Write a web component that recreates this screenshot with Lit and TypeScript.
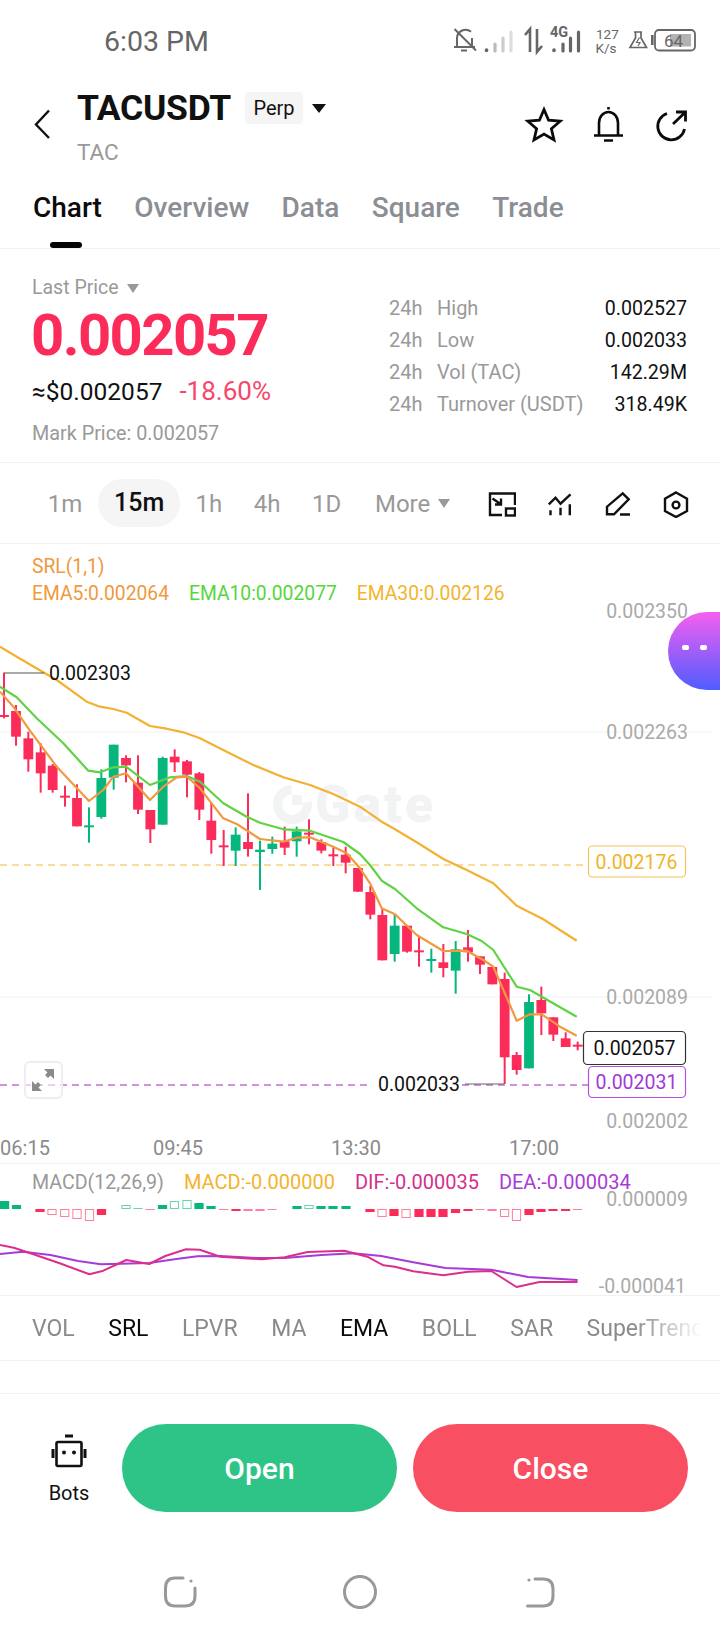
import { LitElement, html, css, svg } from "lit";
import { customElement } from "lit/decorators.js";

type C = [number, number, number, number, number, string];
const RED = "#fb2c5a";
const GREEN = "#07b67c";

// x, wickTop, bodyTop, bodyBottom, wickBottom, colour (measured on two crops)
const c3: C[] = [
  [12, 98, 225, 231, 235, "r"], [48, 195, 213, 290, 317, "r"], [85, 275, 295, 358, 395, "r"],
  [122, 310, 337, 400, 458, "r"], [158, 372, 377, 450, 458, "r"], [195, 437, 467, 471, 500, "r"],
  [231, 433, 474, 559, 559, "r"], [267, 502, 556, 562, 608, "g"], [304, 388, 414, 531, 536, "g"],
  [341, 314, 314, 413, 449, "g"], [378, 346, 354, 376, 427, "r"], [414, 346, 428, 509, 522, "r"],
  [451, 510, 510, 568, 609, "r"], [488, 350, 354, 554, 554, "g"], [524, 328, 350, 367, 396, "r"],
  [561, 360, 364, 404, 472, "r"], [598, 396, 400, 509, 540, "r"], [634, 488, 542, 600, 641, "r"],
  [671, 570, 616, 622, 678, "r"], [707, 562, 584, 632, 678, "g"], [744, 460, 606, 627, 650, "r"],
  [780, 602, 629, 636, 750, "g"], [817, 590, 611, 627, 641, "g"], [854, 560, 604, 623, 645, "r"],
  [890, 560, 574, 604, 650, "g"], [927, 538, 578, 584, 613, "r"], [964, 598, 606, 632, 640, "r"],
  [1000, 622, 643, 649, 678, "r"], [1037, 620, 644, 668, 700, "r"], [1074, 684, 684, 755, 756, "r"],
];
const c4: C[] = [
  [31, 318, 336, 404, 418, "r"], [67, 385, 405, 541, 541, "r"], [104, 405, 437, 522, 545, "g"],
  [141, 437, 437, 515, 518, "r"], [177, 467, 511, 517, 560, "r"], [214, 506, 537, 541, 578, "g"],
  [250, 492, 547, 564, 592, "r"], [287, 483, 508, 572, 641, "g"], [324, 450, 502, 517, 545, "r"],
  [360, 529, 529, 554, 582, "r"], [397, 561, 561, 613, 613, "r"], [434, 578, 597, 832, 912, "r"],
  [470, 816, 825, 870, 884, "r"], [507, 643, 666, 865, 865, "g"], [544, 620, 660, 700, 765, "r"],
  [580, 712, 712, 764, 783, "r"], [617, 757, 775, 801, 801, "r"], [653, 785, 794, 800, 811, "r"],
];
const candles: C[] = [
  ...c3.map((c): C => [c[0] / 3, 640 + c[1] / 3, 640 + c[2] / 3, 640 + c[3] / 3, 640 + c[4] / 3, c[5]]),
  ...c4.map((c): C => [360 + c[0] / 3, 780 + c[1] / 3, 780 + c[2] / 3, 780 + c[3] / 3, 780 + c[4] / 3, c[5]]),
];

const pts = (a: number[][], b: number[][]) =>
  [...a.map((p) => `${(p[0] / 3).toFixed(1)},${(640 + p[1] / 3).toFixed(1)}`),
   ...b.map((p) => `${(360 + p[0] / 3).toFixed(1)},${(780 + p[1] / 3).toFixed(1)}`)].join(" ");

const ema30 = pts(
  [[0,20],[50,50],[135,100],[170,120],[260,185],[300,200],[340,207],[380,218],[450,258],[500,266],[550,277],[600,295],[680,335],[760,375],[850,412],[930,435],[1000,462]],
  [[0,80],[65,125],[100,145],[175,190],[250,237],[320,270],[400,310],[470,377],[550,418],[650,482]]);
const ema10 = pts(
  [[0,140],[50,172],[110,235],[190,310],[265,392],[300,397],[340,382],[378,380],[450,435],[510,412],[560,408],[600,425],[670,490],[740,530],[780,548],[850,568],[930,572],[1030,606]],
  [[0,222],[30,255],[65,302],[105,327],[170,385],[250,442],[320,462],[365,483],[400,510],[470,620],[510,630],[650,710]]);
const ema5 = pts(
  [[0,155],[40,200],[85,265],[170,380],[267,483],[310,450],[340,410],[378,400],[450,480],[490,440],[530,412],[561,410],[600,445],[670,535],[710,552],[780,597],[850,605],[890,593],[930,592],[1000,620],[1040,640]],
  [[0,265],[30,310],[65,385],[105,403],[170,465],[250,513],[320,512],[370,540],[400,560],[470,722],[510,703],[545,703],[600,740],[650,767]]);

// x, height (negative = up), style: s solid / h hollow, colour
const bars: [number, number, string, string][] = [
  [4.6,-8,"s","g"],[16.5,-4,"s","g"],[40,3,"s","r"],[52,6,"h","r"],[64.7,8,"h","r"],[77,10,"h","r"],[89.5,12,"h","r"],[101.5,6,"s","r"],
  [126,-4,"h","g"],[138,-1,"s","g"],[150,1,"s","r"],[162.5,-4,"s","g"],[174.5,-8,"h","g"],[187,-9,"h","g"],[199,-6,"s","g"],[211,-3,"s","g"],
  [223.6,1,"s","r"],[236,2,"s","r"],[248,2,"h","r"],[260,2,"h","r"],[272,1,"s","r"],
  [297,-3,"s","g"],[309,-4,"h","g"],[321,-3,"s","g"],[333,-3,"s","g"],[346,-3,"s","g"],
  [370,3,"s","r"],[382,8,"h","r"],[394,7,"s","r"],[406,9,"h","r"],[419,8,"s","r"],[431,8,"s","r"],[443,8,"s","r"],[455.5,4,"s","r"],
  [468,2,"s","r"],[480,1,"s","r"],[492,2,"h","r"],[504.6,8,"h","r"],[516.5,12,"h","r"],[529,6,"s","r"],[541,3,"s","r"],[553,2,"s","r"],[565.6,2,"s","r"],[577.6,1,"s","r"],
];
const mp = (a: number[][]) => a.map((p) => `${(p[0] / 2.178).toFixed(1)},${(1150 + p[1] / 3).toFixed(1)}`).join(" ");
const dif = mp([[0,285],[30,293],[60,307],[130,340],[195,373],[225,362],[275,330],[325,342],[360,318],[405,298],[435,299],[480,320],[570,328],[620,322],[670,306],[750,302],[800,320],[835,346],[860,350],[900,364],[965,376],[1020,365],[1070,363],[1125,411],[1175,396],[1258,396]]);
const dea = mp([[0,312],[50,305],[110,315],[170,333],[220,343],[325,339],[380,328],[430,319],[480,318],[560,324],[620,324],[700,315],[770,310],[830,318],[900,337],[970,354],[1070,359],[1150,381],[1258,390]]);

@customElement("app-root")
export class AppRoot extends LitElement {
  static styles = css`
    :host { display: block; width: 720px; height: 1640px; overflow: hidden; background: #fff;
      font-family: Roboto, "Liberation Sans", sans-serif; color: #111; }
    svg { display: block; }
    .status { height: 78px; display: flex; justify-content: space-between; padding: 0 20px 0 104px; }
    .time { font-size: 28.5px; line-height: 28px; margin-top: 28px; color: #666; }
    .status-icons { width: 250px; height: 36px; margin-top: 20px; }
    .header { height: 104px; display: flex; padding: 0 28px 0 33px; box-sizing: border-box; }
    .back { width: 19px; height: 32px; margin-top: 30px; margin-right: 25px; }
    .title-row { display: flex; align-items: center; height: 32px; margin-top: 14px; }
    .title { font-size: 35.5px; font-weight: 700; letter-spacing: -0.3px; }
    .chip { margin-left: 14px; height: 32px; width: 58px; display: flex; align-items: center; justify-content: center;
      background: #f5f5f5; border-radius: 4px; font-size: 20px; }
    .tri { width: 0; height: 0; border-left: 7px solid transparent; border-right: 7px solid transparent; border-top: 9px solid #111; }
    .chip + .tri { margin-left: 9px; }
    .sub { font-size: 22.5px; line-height: 24px; margin-top: 16px; color: #999; }
    .head-icons { width: 170px; height: 40px; margin-left: auto; margin-top: 26px; }
    .tabs { height: 67px; box-sizing: border-box; border-bottom: 1px solid #f1f1f1; }
    .tab-row { display: flex; gap: 32.4px; padding: 11px 0 0 33px; }
    .tab { font-size: 28px; line-height: 30px; font-weight: 500; color: #8b8e93; }
    .tab.on { color: #0b0b0b; }
    .ink { width: 32px; height: 6px; background: #050505; border-radius: 3px; margin: 19px 0 0 50px; }
    .price { height: 214px; box-sizing: border-box; border-bottom: 1px solid #f1f1f1; display: flex; padding-left: 32px; }
    .left { width: 357px; padding-top: 27px; }
    .last { display: flex; align-items: center; gap: 8px; font-size: 19.5px; line-height: 24px; color: #999; }
    .last .tri, .more .tri { border-top-color: #999; border-left-width: 6.5px; border-right-width: 6.5px; border-top-width: 9px; }
    .big { font-size: 58px; font-weight: 700; line-height: 60px; margin: 5px 0 0 -1px; color: #fb2c5a; letter-spacing: -1.6px; }
    .usd { display: flex; align-items: baseline; gap: 17px; font-size: 24.5px; line-height: 30px; margin-top: 11px; }
    .usd span + span { color: #f6476a; font-size: 26px; }
    .mark { font-size: 19.8px; line-height: 26px; margin-top: 14px; color: #999; }
    .stats { width: 298px; padding-top: 43px; }
    .stat { display: flex; height: 32px; align-items: center; font-size: 20px; color: #999; }
    .stat .h { width: 48px; }
    .stat .v { margin-left: auto; color: #111; font-size: 19.6px; }
    .frames { height: 81px; box-sizing: border-box; border-bottom: 1px solid #f1f1f1; display: flex; align-items: center; padding: 1px 30px 0 32px; }
    .f { font-size: 24px; color: #999; height: 48px; line-height: 48px; padding: 0 15.75px; border-radius: 24px; }
    .f.on { color: #111; font-weight: 500; font-size: 25px; padding: 0 16px; background: #f5f5f5; margin: -1px -0.5px 0 0; }
    .more { display: flex; align-items: center; gap: 8px; font-size: 24px; color: #999; padding-left: 18px; }
    .tools { display: flex; gap: 30px; margin-left: auto; }
    .tools svg { width: 28px; height: 28px; }
    .chart { position: relative; height: 620px; box-sizing: border-box; border-bottom: 1px solid #f1f1f1; padding: 10px 0 0 32px; overflow: hidden; }
    .plot { position: absolute; left: 0; top: 0; }
    .leg { position: relative; font-size: 19.3px; line-height: 26px; color: #f0993e; }
    .leg-row { position: relative; display: flex; gap: 20px; font-size: 19.3px; line-height: 26px; margin-top: 1px; }
    .orange { color: #f0993e; } .lime { color: #55d63c; } .amber { color: #f4b32c; }
    .bubble { position: absolute; left: 668px; top: 68px; width: 60px; height: 78px; border-radius: 39px 0 0 39px;
      background: linear-gradient(180deg, #f55ff0, #4f5cff); display: flex; align-items: center; justify-content: center; gap: 11px; padding: 0 8px 8px 0; box-sizing: border-box; }
    .eye { width: 7px; height: 5px; border-radius: 2px; background: #fff; }
    .expand { position: absolute; left: 24px; top: 517px; width: 39px; height: 38px; box-sizing: border-box; border: 2px solid #eeeeee; border-radius: 6px; background: rgba(255,255,255,.55); }
    .macd { position: relative; height: 132px; box-sizing: border-box; border-bottom: 1px solid #f1f1f1; }
    .macd-leg { position: relative; display: flex; align-items: baseline; gap: 20px; padding: 5px 0 0 32px; font-size: 20px; line-height: 26px; }
    .gray { color: #999; font-size: 19.6px; } .pink { color: #d4308c; } .violet { color: #a83bd6; }
    .inds { height: 65px; box-sizing: border-box; border-bottom: 1px solid #f1f1f1; display: flex; align-items: center; gap: 33.5px; padding-left: 32px; width: 703px;
      font-size: 23px; color: #8a8a8a; white-space: nowrap; overflow: hidden;
      -webkit-mask-image: linear-gradient(90deg, #000 90%, transparent); mask-image: linear-gradient(90deg, #000 90%, transparent); }
    .inds .on { color: #0b0b0b; }
    .rule { width: 720px; height: 1px; background: #f1f1f1; margin-top: -1px; }
    .inds-line { height: 33px; box-sizing: border-box; border-bottom: 1px solid #f1f1f1; }
    .foot { display: flex; gap: 16px; height: 118px; padding: 30px 32px 0 18px; }
    .bots { width: 88px; box-sizing: border-box; padding: 10px 0 0 14px; display: flex; flex-direction: column; align-items: center; font-size: 20px; }
    .bots svg { width: 36px; height: 34px; }
    .bots span { margin-top: 13px; line-height: 24px; }
    .btn { flex: 1; height: 88px; border-radius: 44px; display: flex; align-items: center; justify-content: center; color: #fff; font-size: 30px; font-weight: 500; }
    .open { background: #2ec487; } .close { background: #f94f63; }
    .nav { width: 720px; height: 55px; margin-top: 18px; }
  `;

  private statusIcons() {
    return html`<svg class="status-icons" viewBox="450 20 250 36" fill="none" stroke="#666">
      <path d="M457 46V38a8.500 8.500 0 0 1 14-6.200M472 38v8M454 47H475M461 50.500h6" stroke-width="2"/>
      <path d="M454.500 29L476 50.500" stroke-width="2"/>
      <g stroke-width="3.200" stroke-linecap="round">
        <path d="M486.500 50v.5" stroke-width="3.600"/>
        <path d="M495 44v7" stroke="#bbb"/><path d="M503 38v13" stroke="#ccc"/><path d="M511 32v19" stroke="#ddd"/>
      </g>
      <path d="M530 52V29L525 35M537 29V52L542 46" stroke-width="2.600"/>
      <g stroke-width="3.200" stroke-linecap="round">
        <path d="M554 50v.5" stroke-width="3.600"/><path d="M563 44v7"/><path d="M570.500 38v13"/><path d="M578.500 32v19"/>
      </g>
      <path d="M634 32H642M635.500 32V38L630 47.500H646.500L641 38V32" stroke-width="1.700"/>
      <path d="M639.500 37.500l-3 5h3.500l-2 3.500" stroke-width="1.200"/>
      <rect x="651" y="35" width="2.600" height="10" fill="#666" stroke="none"/>
      <rect x="655" y="30" width="40" height="20.500" rx="4" stroke-width="1.800"/>
      <rect x="670" y="34" width="21" height="12.500" fill="#b2b2b2" stroke="none"/>
      <g fill="#666" stroke="none" font-family="Roboto, sans-serif">
        <text x="550" y="36.500" font-size="14.500" font-weight="700">4G</text>
        <text x="596" y="38.500" font-size="13.500">127</text>
        <text x="595.500" y="53" font-size="13.500">K/s</text>
        <text x="664" y="47" font-size="17">64</text>
      </g>
    </svg>`;
  }

  private plot() {
    return html`<svg class="plot" width="720" height="620" viewBox="0 544 720 620" fill="none">
      <path d="M0 732H712M0 997H712" stroke="#f1f2f3" stroke-width="1"/>
      <circle cx="292.500" cy="804.500" r="15" stroke="#f1f3f5" stroke-width="9" stroke-dasharray="72 22.300" transform="rotate(-10 292.500 804.500)"/>
      <rect x="292" y="795" width="10" height="10" fill="#f1f3f5"/>
      <text x="315" y="822" font-family="Roboto, sans-serif" font-size="52" font-weight="900" letter-spacing="3" fill="#f1f3f5">Gate</text>
      <path d="M0 865H588" stroke="#f9d27a" stroke-width="1.600" stroke-dasharray="7 5"/>
      <path d="M0 1085H372M462 1085H588" stroke="#c46cd6" stroke-width="1.300" stroke-dasharray="7 5"/>
      ${candles.map((c) => {
        const col = c[5] === "r" ? RED : GREEN;
        return svg`<rect x=${c[0] - 1} y=${c[1]} width="2" height=${c[4] - c[1]} fill=${col}/>
          <rect x=${c[0] - 4.9} y=${c[2]} width="9.8" height=${Math.max(c[3] - c[2], 2)} fill=${col}/>`;
      })}
      <polyline points=${ema30} stroke="#f2b132" stroke-width="2.200" stroke-linejoin="round"/>
      <polyline points=${ema10} stroke="#5fd343" stroke-width="2.200" stroke-linejoin="round"/>
      <polyline points=${ema5} stroke="#f0993e" stroke-width="2.200" stroke-linejoin="round"/>
      <path d="M4 673H44" stroke="#555" stroke-width="1.200"/>
      <path d="M465 1084H504" stroke="#666" stroke-width="1.200"/>
      <g font-family="Roboto, sans-serif" font-size="19.500">
        <text x="49" y="680" fill="#111">0.002303</text>
        <text x="378" y="1091" fill="#111">0.002033</text>
        <g fill="#aaa" text-anchor="end">
          <text x="688" y="618">0.002350</text>
          <text x="688" y="739">0.002263</text>
          <text x="688" y="1004">0.002089</text>
          <text x="688" y="1128">0.002002</text>
        </g>
        <g fill="#8a8a8a" text-anchor="middle" font-size="20">
          <text x="25" y="1155">06:15</text>
          <text x="178" y="1155">09:45</text>
          <text x="356" y="1155">13:30</text>
          <text x="534" y="1155">17:00</text>
        </g>
        <rect x="588.500" y="846" width="97" height="31" rx="4" fill="#fff" stroke="#f7c25e" stroke-width="1.200"/>
        <text x="636.500" y="869" text-anchor="middle" fill="#f0b429">0.002176</text>
        <rect x="583.500" y="1031.500" width="102" height="33" rx="4" fill="#fff" stroke="#333" stroke-width="1.200"/>
        <text x="634.500" y="1055" text-anchor="middle" fill="#111">0.002057</text>
        <rect x="588.500" y="1066.500" width="97" height="31" rx="4" fill="#fff" stroke="#b44fe0" stroke-width="1.200"/>
        <text x="636.500" y="1089" text-anchor="middle" fill="#a338d8">0.002031</text>
      </g>
    </svg>`;
  }

  private macdPlot() {
    return html`<svg class="plot" width="720" height="132" viewBox="0 1164 720 132" fill="none">
      ${bars.map(([x, h, st, col]) => {
        const c = col === "r" ? RED : GREEN;
        const y = h < 0 ? 1209 + h : 1209;
        const ah = Math.abs(h);
        return st === "s" || ah < 2
          ? svg`<rect x=${x - 4.6} y=${y} width="9.2" height=${ah} fill=${c} opacity=${ah < 2 ? 0.6 : 1}/>`
          : svg`<rect x=${x - 4.1} y=${y + 0.5} width="8.2" height=${ah - 1} stroke=${c} stroke-opacity=".6" stroke-width="1"/>`;
      })}
      <polyline points=${dea} stroke="#a83bd6" stroke-width="2" stroke-linejoin="round"/>
      <polyline points=${dif} stroke="#dc2f8b" stroke-width="2" stroke-linejoin="round"/>
      <g font-family="Roboto, sans-serif" font-size="19.500" fill="#aaa" text-anchor="end">
        <text x="688" y="1206">0.000009</text>
        <text x="686" y="1293">-0.000041</text>
      </g>
    </svg>`;
  }

  render() {
    return html`
      <div class="status"><div class="time">6:03 PM</div>${this.statusIcons()}</div>
      <div class="header">
        <svg class="back" viewBox="0 0 19 32" fill="none" stroke="#111" stroke-width="2.400"><path d="M16 2.500L3 16.500L16 30"/></svg>
        <div>
          <div class="title-row"><span class="title">TACUSDT</span><span class="chip">Perp</span><span class="tri"></span></div>
          <div class="sub">TAC</div>
        </div>
        <svg class="head-icons" viewBox="522 104 170 40" fill="none" stroke="#0b0b0b" stroke-width="2.800">
          <path d="M544 109.500L548.600 120.200L560.200 121.200L551.400 128.800L554 140L544 134.100L534 140L536.600 128.800L527.800 121.200L539.400 120.200Z" stroke-linejoin="miter"/>
          <path d="M599 135V123a9.500 11 0 0 1 19 0V135M594 135.500H623M604 140.500H613M608.500 109.500V107" stroke-width="2.600"/>
          <path d="M667 113.500A13.500 13.500 0 1 0 684.500 129"/>
          <path d="M673 124L685 112.500M676 112H685.500V121.500"/>
        </svg>
      </div>
      <div class="tabs">
        <div class="tab-row">
          <span class="tab on">Chart</span><span class="tab">Overview</span><span class="tab">Data</span><span class="tab">Square</span><span class="tab">Trade</span>
        </div>
        <div class="ink"></div>
      </div>
      <div class="price">
        <div class="left">
          <div class="last">Last Price <span class="tri"></span></div>
          <div class="big">0.002057</div>
          <div class="usd"><span>≈$0.002057</span><span>-18.60%</span></div>
          <div class="mark">Mark Price: 0.002057</div>
        </div>
        <div class="stats">
          <div class="stat"><span class="h">24h</span><span>High</span><span class="v">0.002527</span></div>
          <div class="stat"><span class="h">24h</span><span>Low</span><span class="v">0.002033</span></div>
          <div class="stat"><span class="h">24h</span><span>Vol (TAC)</span><span class="v">142.29M</span></div>
          <div class="stat"><span class="h">24h</span><span>Turnover (USDT)</span><span class="v">318.49K</span></div>
        </div>
      </div>
      <div class="frames">
        <span class="f">1m</span><span class="f on">15m</span><span class="f">1h</span><span class="f">4h</span><span class="f">1D</span>
        <span class="more">More <span class="tri"></span></span>
        <div class="tools">
          <svg viewBox="0 0 28 28" fill="none" stroke="#111" stroke-width="2.400">
            <path d="M14 25H2V3.500H27V15M4.500 8.500L12.500 14M13 8.500V14.500H7"/>
            <rect x="18" y="18.500" width="9" height="7"/>
          </svg>
          <svg viewBox="0 0 28 28" fill="none" stroke="#111" stroke-width="2.400">
            <path d="M2.800 14.300L9.500 7.700L14.500 13.700L24.500 4.300M4.500 20.300V25.300M14.500 17.700V25.300M23.800 14.300V25.300"/>
          </svg>
          <svg viewBox="0 0 28 28" fill="none" stroke="#111" stroke-width="2.400">
            <path d="M3 24.300V16.700L18.700 3.300L24.700 9.300L10 24.300ZM16 24.500H26"/>
          </svg>
          <svg viewBox="0 0 28 28" fill="none" stroke="#111" stroke-width="2.400">
            <path d="M14 2.500L25 8.700V21L14 27L3 21V8.700Z"/><circle cx="14" cy="15" r="3.400"/>
          </svg>
        </div>
      </div>
      <div class="chart">
        ${this.plot()}
        <div class="leg">SRL(1,1)</div>
        <div class="leg-row"><span class="orange">EMA5:0.002064</span><span class="lime">EMA10:0.002077</span><span class="amber">EMA30:0.002126</span></div>
        <div class="bubble"><span class="eye"></span><span class="eye"></span></div>
        <div class="expand">
          <svg width="35" height="34" viewBox="0 0 35 34" fill="#8a8a8a">
            <path d="M18 6H28V16L24.500 12.500L22 15L19 12L21.500 9.500ZM16 28H6V18L9.500 21.500L12 19L15 22L12.500 24.500Z"/>
          </svg>
        </div>
      </div>
      <div class="macd">
        ${this.macdPlot()}
        <div class="macd-leg"><span class="gray">MACD(12,26,9)</span><span class="amber">MACD:-0.000000</span><span class="pink">DIF:-0.000035</span><span class="violet">DEA:-0.000034</span></div>
      </div>
      <div class="inds">
        <span>VOL</span><span class="on">SRL</span><span>LPVR</span><span>MA</span><span class="on">EMA</span><span>BOLL</span><span>SAR</span><span>SuperTrend</span>
      </div>
      <div class="rule"></div>
      <div class="inds-line"></div>
      <div class="foot">
        <div class="bots">
          <svg viewBox="0 0 36 34" fill="none" stroke="#111">
            <path d="M14 2H22" stroke-width="3"/>
            <rect x="5.500" y="8" width="25" height="24" rx="1.500" stroke-width="2.600"/>
            <path d="M2 15V24M34 15V24" stroke-width="3"/>
            <circle cx="13" cy="18.500" r="2" fill="#111" stroke="none"/><circle cx="23" cy="18.500" r="2" fill="#111" stroke="none"/>
          </svg>
          <span>Bots</span>
        </div>
        <div class="btn open">Open</div>
        <div class="btn close">Close</div>
      </div>
      <svg class="nav" viewBox="0 1560 720 55" fill="none" stroke="#999" stroke-width="3" stroke-linecap="round">
        <path d="M183 1578H175Q165.500 1578 165.500 1588V1596Q165.500 1606 175 1606H185Q195 1606 195 1596V1588"/>
        <circle cx="191" cy="1581" r="1.600" fill="#999" stroke="none"/>
        <circle cx="360" cy="1592" r="15.500"/>
        <path d="M535 1579H543Q553 1579 553 1589V1596Q553 1606 543 1606H527.500"/>
        <circle cx="529" cy="1580" r="1.600" fill="#999" stroke="none"/>
      </svg>
    `;
  }
}
